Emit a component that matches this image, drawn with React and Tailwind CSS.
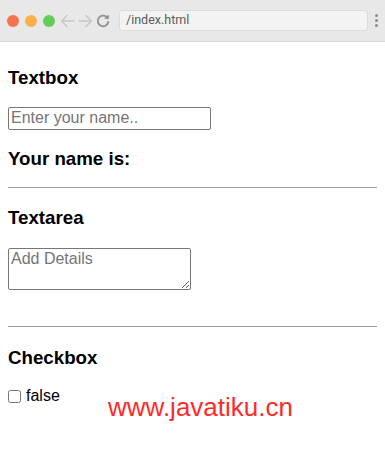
import { useState } from 'react';

function BrowserBar() {
  return (
    <div className="flex h-[42px] items-center border-b border-[#d6d6d6] bg-[#e8e8e8] pl-[7px] pr-[5px]">
      <div className="flex items-center gap-[6px]">
        <span className="h-3 w-3 rounded-full bg-[#f7704f]" />
        <span className="h-3 w-3 rounded-full bg-[#fbb04b]" />
        <span className="h-3 w-3 rounded-full bg-[#62cd5a]" />
      </div>
      <svg className="ml-[5px]" width="15" height="14" viewBox="0 0 15 14" fill="none" stroke="#c6c6c6" strokeWidth="1.4" strokeLinecap="round" strokeLinejoin="round">
        <path d="M14 7H1.5M7 1.5L1.5 7L7 12.5" />
      </svg>
      <svg className="ml-[3px]" width="15" height="14" viewBox="0 0 15 14" fill="none" stroke="#c6c6c6" strokeWidth="1.4" strokeLinecap="round" strokeLinejoin="round">
        <path d="M1 7h12.5M8 1.5L13.5 7L8 12.5" />
      </svg>
      <svg className="ml-[3px]" width="14" height="14" viewBox="0 0 14 14" fill="none">
        <path d="M11.6 4.2A5.3 5.3 0 1 0 12.3 8" stroke="#8d9297" strokeWidth="1.8" strokeLinecap="round" />
        <path d="M8.2 4.8H12.8V0.4Z" fill="#8d9297" />
      </svg>
      <div className="ml-[9px] flex h-[21px] w-[249px] items-center rounded-[3px] border border-[#dcdcdc] bg-[#f3f3f3] pl-[6px] font-['Roboto',sans-serif] text-[12.5px] text-[#5c5c5c]">
        /index.html
      </div>
      <div className="ml-auto mr-[2px] flex flex-col gap-[2px]">
        <span className="h-[3px] w-[3px] rounded-full bg-[#8a8a8a]" />
        <span className="h-[3px] w-[3px] rounded-full bg-[#8a8a8a]" />
        <span className="h-[3px] w-[3px] rounded-full bg-[#8a8a8a]" />
      </div>
    </div>
  );
}

export default function App() {
  const [name, setName] = useState('');
  const [details, setDetails] = useState('');
  const [checked, setChecked] = useState(false);

  return (
    <div className="relative h-[465px] overflow-hidden bg-white font-['Liberation_Sans',Arial,sans-serif] text-black">
      <BrowserBar />

      <div className="px-2">
        <h3 className="mt-[25px] text-[18.72px] font-bold leading-[21.5px]">Textbox</h3>
        <input
          type="text"
          value={name}
          onChange={(e) => setName(e.target.value)}
          placeholder="Enter your name.."
          className="mt-[18px] block h-[23px] w-[203px] rounded-[2px] border border-[#767676] px-[2px] text-[16px] leading-[18px] placeholder:text-[#757575] focus:outline-none"
        />
        <h3 className="mt-[18px] text-[18.72px] font-bold leading-[21.5px]">Your name is: {name}</h3>

        <div className="mt-[18px] h-px bg-[#9c9c9c]" />

        <h3 className="mt-[19px] text-[18.72px] font-bold leading-[21.5px]">Textarea</h3>
        <textarea
          value={details}
          onChange={(e) => setDetails(e.target.value)}
          placeholder="Add Details"
          className="mt-[19px] block h-[42px] w-[183px] resize rounded-[2px] border border-[#767676] px-[2px] py-px text-[16px] leading-[18px] placeholder:text-[#757575] focus:outline-none"
        />

        <div className="mt-[36px] h-px bg-[#9c9c9c]" />

        <h3 className="mt-[20px] text-[18.72px] font-bold leading-[21.5px]">Checkbox</h3>
        <label className="mt-[19px] flex items-center text-[16px] leading-[18px]">
          <input
            type="checkbox"
            checked={checked}
            onChange={(e) => setChecked(e.target.checked)}
            className="m-0 h-[13px] w-[13px]"
          />
          <span className="ml-[5px]">{String(checked)}</span>
        </label>
      </div>

      <div className="pointer-events-none absolute left-[108px] top-[392px] font-['Liberation_Sans',Arial,sans-serif] text-[26px] leading-[30px] text-[#ff2a2a]">
        www.javatiku.cn
      </div>
    </div>
  );
}
